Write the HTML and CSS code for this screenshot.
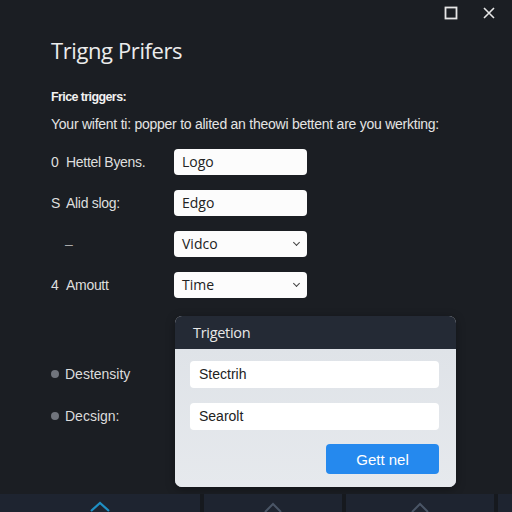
FILE: index.html
```html
<!DOCTYPE html>
<html>
<head>
<meta charset="utf-8">
<link rel="stylesheet" href="styles.css">
</head>
<body>
<div class="window">
  <div class="controls">
    <svg class="ctl" width="14" height="14" viewBox="0 0 14 14"><rect x="1.5" y="1.5" width="11" height="11" fill="none" stroke="#e6e6e6" stroke-width="1.8"/></svg>
    <svg class="ctl" width="14" height="14" viewBox="0 0 14 14"><path d="M2 2 L12 12 M12 2 L2 12" stroke="#e6e6e6" stroke-width="1.6"/></svg>
  </div>
  <div class="content">
    <h1 class="title">Trigng Prifers</h1>
    <div class="subhead">Frice triggers:</div>
    <p class="desc">Your wifent ti: popper to alited an theowi bettent are you werkting:</p>
    <div class="form">
      <div class="label"><span class="num">0</span>Hettel Byens.</div>
      <div class="field">Logo</div>
      <div class="label"><span class="num">S</span>Alid slog:</div>
      <div class="field">Edgo</div>
      <div class="label dash">–</div>
      <div class="field select">Vidco<span class="chev"></span></div>
      <div class="label"><span class="num">4</span>Amoutt</div>
      <div class="field select">Time<span class="chev"></span></div>
    </div>
    <div class="lower">
      <div class="side">
        <div class="bullet">Destensity</div>
        <div class="bullet">Decsign:</div>
      </div>
      <div class="popup">
        <div class="popup-head">Trigetion</div>
        <div class="popup-body">
          <div class="pfield">Stectrih</div>
          <div class="pfield">Searolt</div>
          <div class="actions"><button class="btn">Gett nel</button></div>
        </div>
      </div>
    </div>
  </div>
  <div class="tabbar">
    <div class="tab t1"><svg width="26" height="12" viewBox="0 0 26 12"><path d="M4 11 L13 3 L22 11" fill="none" stroke="#1f8fc4" stroke-width="2.2"/></svg></div>
    <div class="tab t2"><svg width="26" height="12" viewBox="0 0 26 12"><path d="M5 12 L13 4 L21 12" fill="none" stroke="#4a5566" stroke-width="2"/></svg></div>
    <div class="tab t3"><svg width="26" height="12" viewBox="0 0 26 12"><path d="M5 12 L13 4 L21 12" fill="none" stroke="#4a5566" stroke-width="2"/></svg></div>
    <div class="tab t4"></div>
  </div>
</div>
</body>
</html>
```
FILE: styles.css
```css
html, body {
  margin: 0;
  padding: 0;
  background: #1b1e23;
}
body {
  font-family: "Open Sans", "Noto Sans", sans-serif;
  color: #e6e6e6;
}
.window {
  width: 512px;
  height: 512px;
  display: flex;
  flex-direction: column;
  overflow: hidden;
}
.controls {
  display: flex;
  justify-content: flex-end;
  gap: 24px;
  padding: 6px 16px 0 0;
  height: 14px;
}
.ctl {
  display: block;
}
.content {
  flex: 1;
  padding-left: 51px;
}
.title {
  margin: 15px 0 0 0;
  font-size: 22px;
  font-weight: 400;
  line-height: 30px;
  color: #ececec;
  letter-spacing: -0.4px;
}
.subhead {
  margin-top: 23px;
  font-family: "Liberation Sans", Arial, sans-serif;
  font-size: 12.5px;
  font-weight: 700;
  line-height: 18px;
  color: #f2f2f2;
  letter-spacing: -0.6px;
}
.desc {
  margin: 8px 0 0 0;
  font-family: "Liberation Sans", Arial, sans-serif;
  font-size: 14px;
  line-height: 20px;
  color: #e4e4e4;
  letter-spacing: -0.25px;
}
.form {
  margin-top: 15px;
  display: grid;
  grid-template-columns: 123px 133px;
  row-gap: 15px;
  align-items: center;
}
.label {
  font-family: "Liberation Sans", Arial, sans-serif;
  font-size: 14px;
  color: #dedede;
  letter-spacing: -0.3px;
  display: flex;
}
.num {
  width: 15px;
}
.label.dash {
  padding-left: 14px;
  color: #aaa;
}
.field {
  height: 26px;
  box-sizing: border-box;
  background: #fcfcfc;
  border-radius: 4px;
  color: #222;
  font-size: 14px;
  line-height: 26px;
  padding-left: 8px;
  position: relative;
}
.select .chev {
  position: absolute;
  right: 8px;
  top: 9px;
  width: 4px;
  height: 4px;
  border-right: 1.4px solid #444;
  border-bottom: 1.4px solid #444;
  transform: rotate(45deg);
}
.lower {
  margin-top: 18px;
  display: grid;
  grid-template-columns: 124px 281px;
}
.side {
  padding-top: 48px;
  display: flex;
  flex-direction: column;
  gap: 22px;
}
.bullet {
  font-family: "Liberation Sans", Arial, sans-serif;
  font-size: 14px;
  line-height: 20px;
  color: #dcdcdc;
  display: flex;
  align-items: center;
  gap: 6px;
}
.bullet::before {
  content: "";
  width: 8px;
  height: 8px;
  border-radius: 50%;
  background: #70747c;
}
.popup {
  border-radius: 7px;
  overflow: hidden;
  background: #e1e5ea;
  box-shadow: 0 2px 10px rgba(0,0,0,0.35);
}
.popup-head {
  background: #242a35;
  height: 33px;
  line-height: 33px;
  padding-left: 18px;
  font-size: 14.5px;
  color: #e8e8e8;
  letter-spacing: -0.3px;
}
.popup-body {
  padding: 12px 17px 13px 15px;
  display: flex;
  flex-direction: column;
  gap: 15px;
  background: linear-gradient(180deg, #dfe3e8, #e6e9ed);
}
.pfield {
  height: 27px;
  background: #ffffff;
  border-radius: 4px;
  line-height: 27px;
  padding-left: 9px;
  font-family: "Liberation Sans", Arial, sans-serif;
  font-size: 14px;
  color: #222;
}
.actions {
  display: flex;
  justify-content: flex-end;
  margin-top: -1px;
}
.btn {
  width: 113px;
  height: 30px;
  border: none;
  border-radius: 4px;
  background: #2589ee;
  color: #ffffff;
  font-family: "Liberation Sans", Arial, sans-serif;
  font-size: 15px;
  padding: 0;
}
.tabbar {
  height: 18px;
  display: flex;
  gap: 4px;
  background: #16191e;
}
.tab {
  background: #1e2430;
  display: flex;
  justify-content: center;
  align-items: flex-end;
}
.tab svg { display: block; }
.t1 { width: 200px; }
.t2 { width: 138px; }
.t3 { width: 148px; }
.t4 { flex: 1; }
```
